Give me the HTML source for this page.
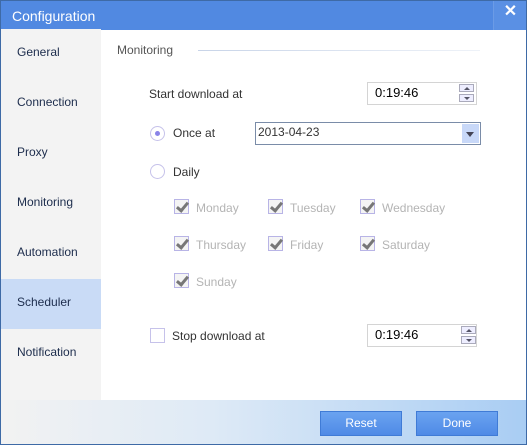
<!DOCTYPE html><html><head><style>
*{margin:0;padding:0;box-sizing:border-box}
body{width:527px;height:445px;overflow:hidden;font-family:"Liberation Sans",sans-serif;font-size:12px;position:relative;background:#fff}
.frame{position:absolute;inset:0;border:1px solid #3e6aa6}
.title{position:absolute;left:0;top:0;width:527px;height:30px;background:#5189e1;color:#fff;font-size:14px;padding:8px 0 0 12px}
.close{position:absolute;right:0;top:0;width:34px;height:30px;background:#5a90e4;border-left:1px solid #6b9be6;color:#fff;font-size:16px;font-weight:bold;text-align:center;line-height:24px}
.side{position:absolute;left:1px;top:29px;width:100px;height:371px;background:#f3f3f3}
.side div{height:50px;line-height:47px;padding-left:16px;color:#1c2c4c}
.side .sel{background:#c9dbf6}
.abs{position:absolute;white-space:nowrap}
.bottom{position:absolute;left:1px;top:400px;width:525px;height:44px;background:linear-gradient(to right,#f2f2f2,#deeaf6 40%,#a9cdf3)}
.btn{position:absolute;top:411px;width:82px;height:25px;background:linear-gradient(#6aa3f0,#4f8ae6);border:1px solid #3f7bd6;color:#fff;text-align:center;line-height:23px;font-size:12px}
.chk{position:absolute;width:15px;height:15px;border:1px solid #b8b4e6;background:#f4f4f4}
.chk::after{content:"";position:absolute;left:4px;top:0px;width:4px;height:9px;border:solid #777;border-width:0 3px 3px 0;transform:rotate(40deg)}
.day{color:#b4b4b4}
.spin{position:absolute;border:1px solid #d4d4d4;background:#fff;font-size:13px;padding-left:7px;line-height:20px}
.arr{position:absolute;width:15px;height:8px;border:1px solid #aab;background:#eef}
.arr::after{content:"";position:absolute;left:4px;border:3px solid transparent}
.up::after{top:-1px;border-bottom:3px solid #556}
.dn::after{top:2px;border-top:3px solid #556}
</style></head><body>
<div class="title">Configuration</div><div class="close">✕</div>
<div class="side">
<div>General</div><div>Connection</div><div>Proxy</div><div>Monitoring</div><div>Automation</div><div class="sel">Scheduler</div><div>Notification</div>
</div>
<div class="abs" style="left:117px;top:43px;color:#555;font-size:12px">Monitoring</div>
<div class="abs" style="left:198px;top:50px;width:282px;height:1px;background:linear-gradient(to right,#c8d4e8,#eef2f8)"></div>
<div class="abs" style="left:149px;top:87px;color:#333">Start download at</div>
<div class="spin" style="left:367px;top:82px;width:110px;height:23px">0:19:46</div>
<div class="arr up" style="left:459px;top:84px"></div><div class="arr dn" style="left:459px;top:94px"></div>
<div class="abs" style="left:150px;top:126px;width:15px;height:15px;border:1px solid #c6c2ea;border-radius:50%;background:#fff"></div>
<div class="abs" style="left:155px;top:131px;width:5px;height:5px;border-radius:50%;background:#8a84e8"></div>
<div class="abs" style="left:173px;top:126px;color:#333">Once at</div>
<div class="abs" style="left:255px;top:122px;width:226px;height:23px;border:1px solid #7a8ca8;background:#fff;padding:2px 0 0 2px;color:#333">2013-04-23</div>
<div class="abs" style="left:462px;top:124px;width:17px;height:19px;background:#c8d8f8"></div>
<div class="abs" style="left:466px;top:132px;border:4px solid transparent;border-top:5px solid #445"></div>
<div class="abs" style="left:150px;top:164px;width:15px;height:15px;border:1px solid #c6c2ea;border-radius:50%;background:#fff"></div>
<div class="abs" style="left:173px;top:165px;color:#333">Daily</div>
<div class="chk" style="left:174px;top:199px"></div><div class="abs day" style="left:196px;top:201px">Monday</div>
<div class="chk" style="left:268px;top:199px"></div><div class="abs day" style="left:290px;top:201px">Tuesday</div>
<div class="chk" style="left:360px;top:199px"></div><div class="abs day" style="left:382px;top:201px">Wednesday</div>
<div class="chk" style="left:174px;top:236px"></div><div class="abs day" style="left:196px;top:238px">Thursday</div>
<div class="chk" style="left:268px;top:236px"></div><div class="abs day" style="left:290px;top:238px">Friday</div>
<div class="chk" style="left:360px;top:236px"></div><div class="abs day" style="left:382px;top:238px">Saturday</div>
<div class="chk" style="left:174px;top:273px"></div><div class="abs day" style="left:196px;top:275px">Sunday</div>
<div class="abs" style="left:150px;top:328px;width:15px;height:15px;border:1px solid #c6c2ea;background:#fff"></div>
<div class="abs" style="left:172px;top:329px;color:#333">Stop download at</div>
<div class="spin" style="left:367px;top:324px;width:110px;height:23px">0:19:46</div>
<div class="arr up" style="left:461px;top:326px"></div><div class="arr dn" style="left:461px;top:336px"></div>
<div class="bottom"></div>
<div class="btn" style="left:320px">Reset</div>
<div class="btn" style="left:416px">Done</div>
<div class="frame"></div>
</body></html>
